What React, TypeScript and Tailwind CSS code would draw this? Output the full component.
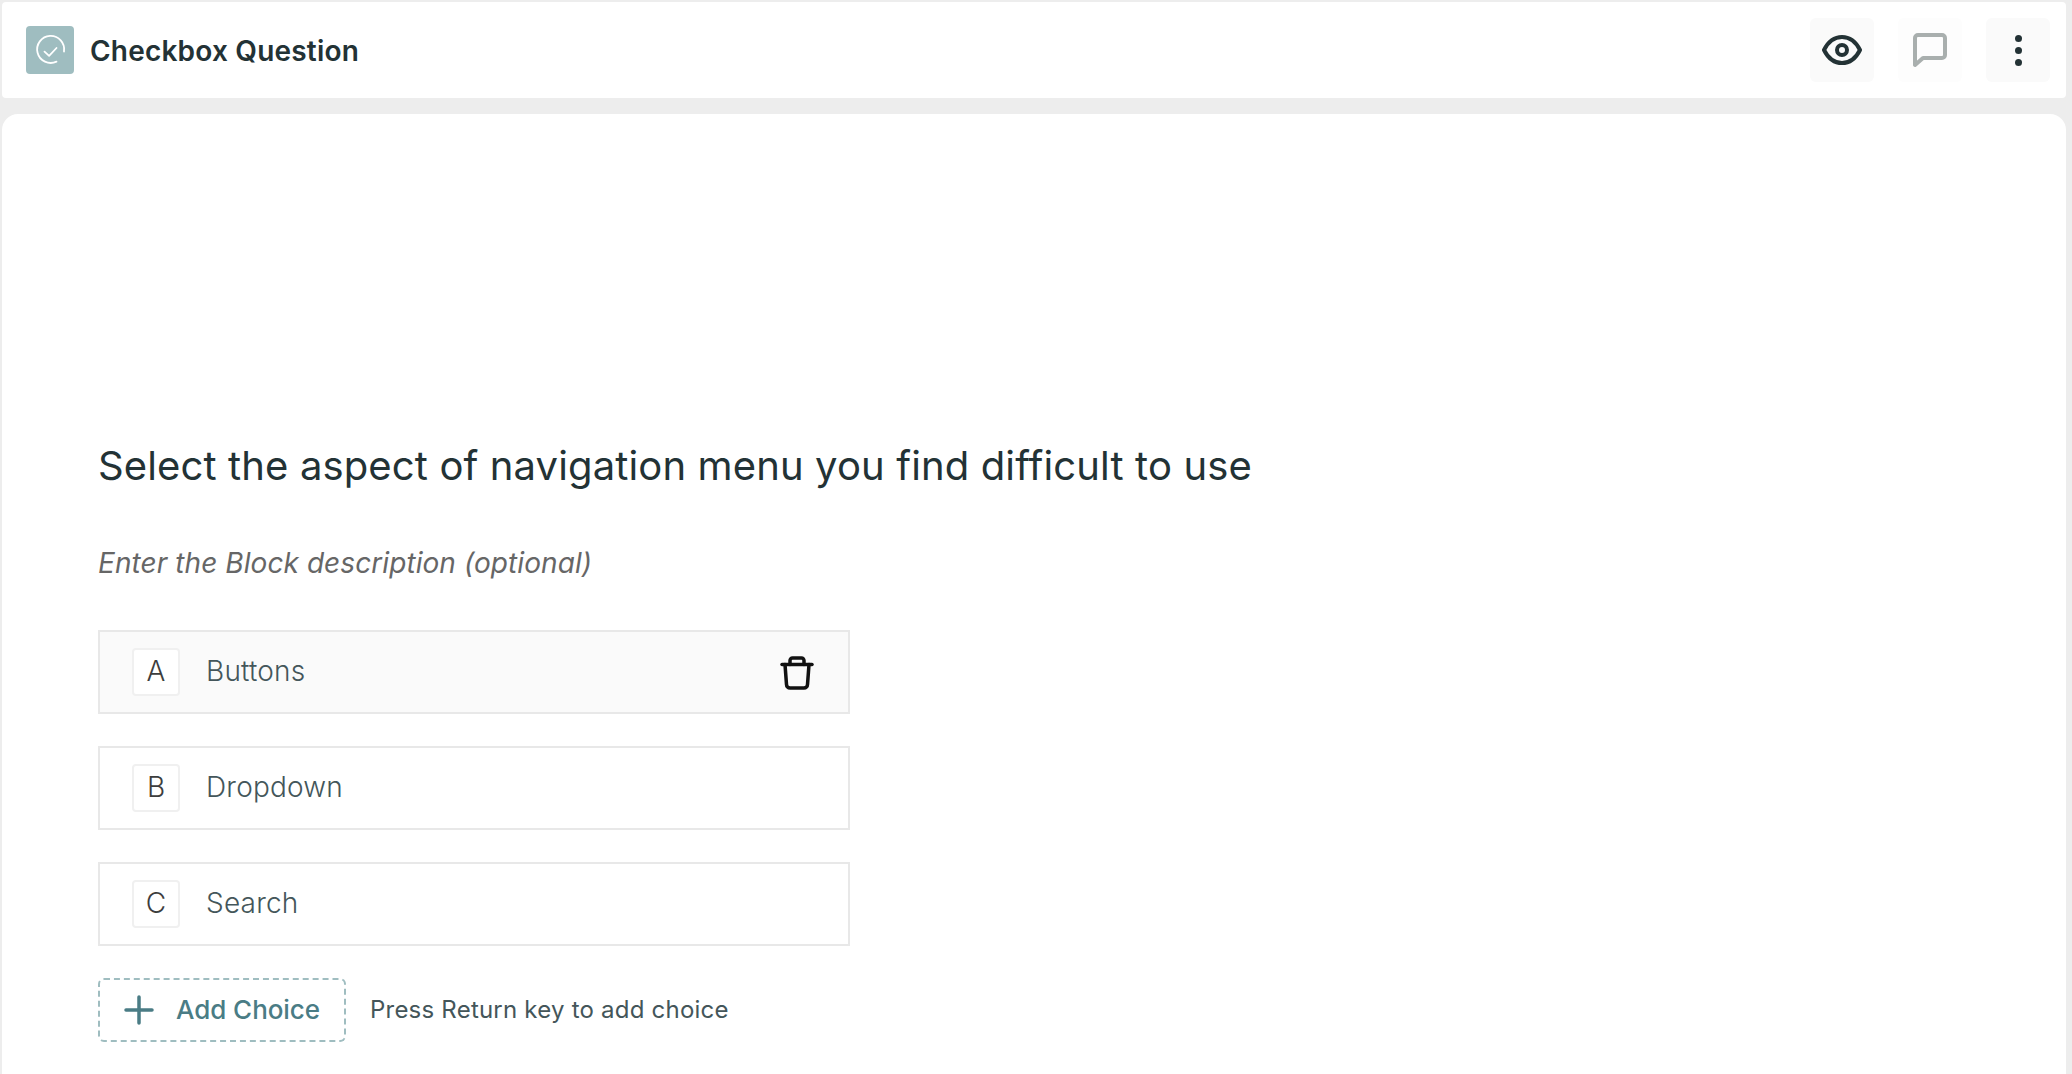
export default function App() {
  const opts = [
    { k: "A", t: "Buttons", active: true },
    { k: "B", t: "Dropdown" },
    { k: "C", t: "Search" },
  ];
  return (
    <div className="h-screen overflow-hidden bg-[#ededed] pt-[2px] pl-[2px] pr-[6px] font-['Inter',sans-serif] flex flex-col gap-[16px]">
      <header className="h-[96px] shrink-0 bg-white rounded-[4px] flex items-center justify-between pl-[24px] pr-[16px]">
        <div className="flex items-center gap-[16px]">
          <div className="w-[48px] h-[48px] rounded-[4px] bg-[#9fbdc0] flex items-center justify-center">
            <svg width="34" height="34" viewBox="0 0 34 34" fill="none" stroke="#fff" strokeWidth="1.8" strokeLinecap="round" strokeLinejoin="round">
              <path d="M23.5 28.6A13.5 13.5 0 1 1 31 18.5" />
              <path d="M11.5 18.6l4.6 4.2 7.4-7.8" />
            </svg>
          </div>
          <h1 className="pt-[1px] text-[28px] leading-none font-semibold tracking-[0.2px] text-[#233235]">Checkbox Question</h1>
        </div>
        <div className="flex items-center gap-[24px]">
          <button className="w-[64px] h-[64px] rounded-[6px] bg-[#fafafa] flex items-center justify-center">
            <svg width="40" height="30" viewBox="0 0 40 30" fill="none" stroke="#233235" strokeWidth="4" strokeLinejoin="round">
              <path d="M2 15C6 7 12 2 20 2s14 5 18 13c-4 8-10 13-18 13S6 23 2 15Z" />
              <circle cx="20" cy="15" r="5" />
            </svg>
          </button>
          <button className="w-[64px] h-[64px] rounded-[6px] bg-[#fdfdfd] flex items-center justify-center">
            <svg width="34" height="35" viewBox="0 0 34 35" fill="none" stroke="#a9afae" strokeWidth="4" strokeLinejoin="round">
              <path d="M2 5a3 3 0 0 1 3-3h24a3 3 0 0 1 3 3v17a3 3 0 0 1-3 3H10l-8 7Z" />
            </svg>
          </button>
          <button className="w-[64px] h-[64px] rounded-[6px] bg-[#fafafa] flex flex-col items-center justify-center gap-[5px]">
            <span className="w-[7px] h-[7px] rounded-full bg-[#233235]" />
            <span className="w-[7px] h-[7px] rounded-full bg-[#233235]" />
            <span className="w-[7px] h-[7px] rounded-full bg-[#233235]" />
          </button>
        </div>
      </header>
      <main className="flex-1 bg-white rounded-t-[16px] pl-[96px] pt-[327px]">
        <h2 className="text-[40px] leading-[50px] font-normal tracking-[0.13px] text-[#233235]">Select the aspect of navigation menu you find difficult to use</h2>
        <p className="mt-[54px] text-[28px] leading-[36px] italic font-normal tracking-[0.07px] text-[#666]">Enter the Block description (optional)</p>
        <div className="mt-[49px] w-[752px] flex flex-col gap-[32px]">
          {opts.map((o) => (
            <div key={o.k} className={`h-[84px] border-2 border-[#e8e8e8] flex items-center pl-[32px] pr-[34px] ${o.active ? "bg-[#fafafa]" : "bg-white"}`}>
              <span className="w-[48px] h-[48px] border-2 border-[#f0f0f0] rounded-[4px] bg-white pb-[2px] flex items-center justify-center text-[28px] font-light text-[#3d3d3d]">{o.k}</span>
              <span className="ml-[26px] pb-[2px] text-[28px] font-light tracking-[0.2px] text-[#44565a] flex-1">{o.t}</span>
              {o.active && (
                <svg className="mt-[2px]" width="34" height="34" viewBox="0 0 34 34" fill="none" stroke="#111" strokeWidth="3.5" strokeLinecap="round" strokeLinejoin="round">
                  <path d="M2 8.5h30" />
                  <path d="M10 8.5V4.5a2.5 2.5 0 0 1 2.5-2.5h9a2.5 2.5 0 0 1 2.5 2.5v4" />
                  <path d="M5 8.5l1.5 20a3.5 3.5 0 0 0 3.5 3.5h14a3.5 3.5 0 0 0 3.5-3.5l1.5-20" />
                </svg>
              )}
            </div>
          ))}
        </div>
        <div className="mt-[32px] flex items-center gap-[24px]">
          <button className="w-[248px] h-[64px] border-2 border-dashed border-[#9fbdc0] rounded-[6px] flex items-center pl-[24px] gap-[22px]">
            <svg width="30" height="30" viewBox="0 0 30 30" fill="none" stroke="#4a7c85" strokeWidth="3.5" strokeLinecap="round">
              <path d="M15 2v26M2 15h26" />
            </svg>
            <span className="pb-[1px] text-[26px] font-medium tracking-[-0.05px] text-[#4a7c85] whitespace-nowrap">Add Choice</span>
          </button>
          <span className="text-[24px] tracking-[0.22px] text-[#44565a]">Press Return key to add choice</span>
        </div>
      </main>
    </div>
  );
}
